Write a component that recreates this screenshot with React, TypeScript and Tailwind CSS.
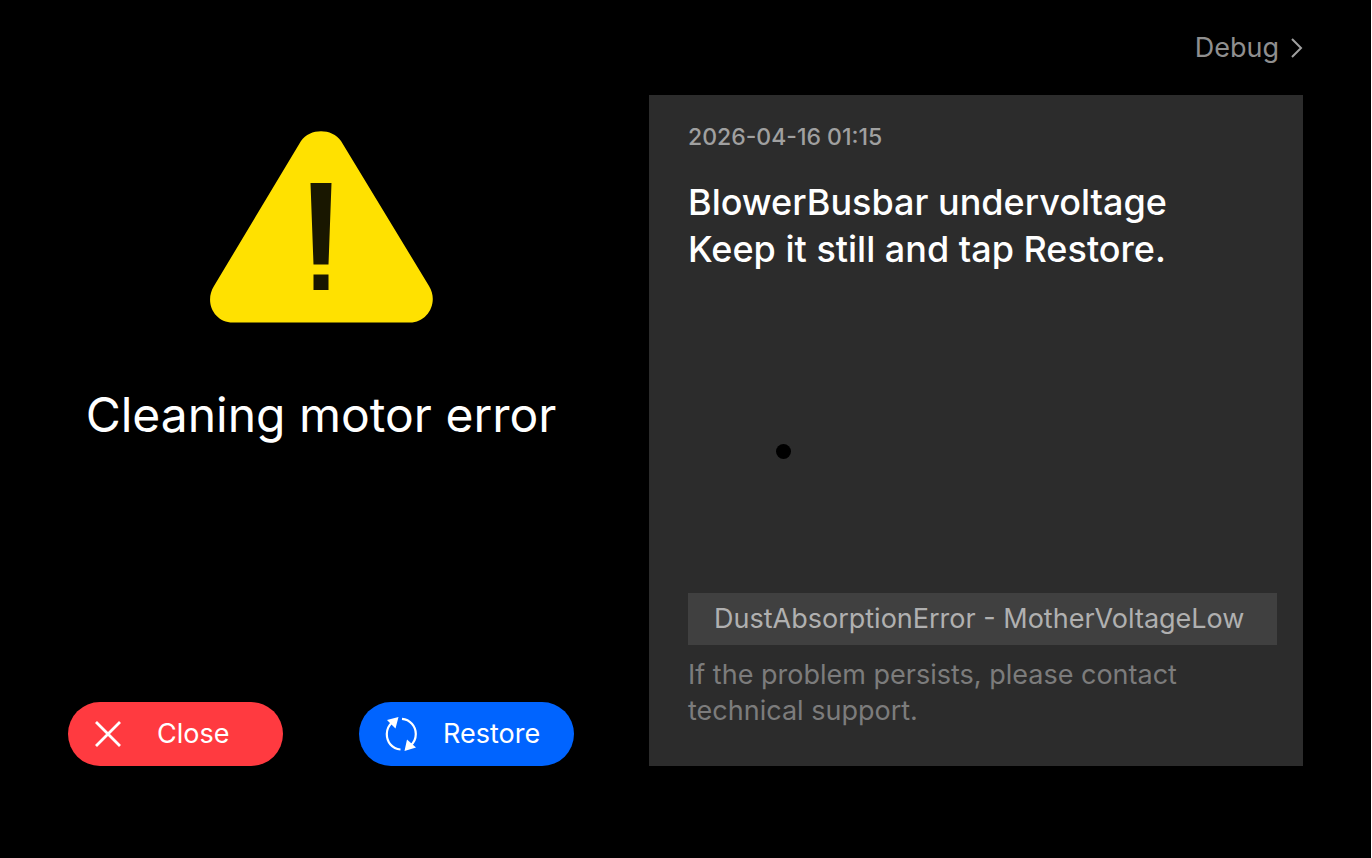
import { useState } from 'react';

const ERROR = {
  title: 'Cleaning motor error',
  time: '2026-04-16 01:15',
  messages: ['BlowerBusbar undervoltage', 'Keep it still and tap Restore.'],
  code: 'DustAbsorptionError - MotherVoltageLow',
};

function WarningIcon() {
  return (
    <svg width="224" height="192" viewBox="0 0 224 192" aria-hidden="true">
      <path
        d="M92 10C101 -3 123 -3 132 10L220 155C230 171 219 191.500 201 191.500H24C5 191.500 -5 171 5 155Z"
        fill="#ffe100"
      />
      <path d="M101.500 52H122.500L119.500 133.500H104.500ZM104.500 143.500H119.500V159H104.500Z" fill="#191700" />
    </svg>
  );
}

function CloseIcon() {
  return (
    <svg width="26" height="26" viewBox="0 0 26 26" aria-hidden="true">
      <path d="M1 1L25 25M25 1L1 25" stroke="#fff" strokeWidth="2.8" />
    </svg>
  );
}

function RestoreIcon() {
  return (
    <svg width="32" height="36" viewBox="0 0 32 36" aria-hidden="true">
      <g fill="none" stroke="#fff" strokeWidth="2.2">
        <path d="M15.500 33.5C7 33 1.8 26 1.8 18C1.8 13 4 9 8 5.5" />
        <path d="M17 2.8C25 3.5 30.8 10 30.8 18C30.8 23 29 27 25 30" />
      </g>
      <path d="M2 4L13.500 1L10.500 12.500ZM31 31.500L19.500 35L22 23.500Z" fill="#fff" />
    </svg>
  );
}

export default function App() {
  const [closed, setClosed] = useState(false);

  return (
    <div className="flex min-h-screen flex-col border-r border-white bg-black px-[68px] pb-[92px] font-['Inter',sans-serif] text-white">
      <header className="flex h-[95px] items-center justify-end">
        <a
          href="#debug"
          className="flex items-center gap-3 text-[27px] leading-8 text-[#8f8f8f]"
        >
          Debug
          <svg width="12" height="20" viewBox="0 0 12 20" aria-hidden="true">
            <path d="M1 1L10 10L1 19" fill="none" stroke="#a0a0a0" strokeWidth="2" />
          </svg>
        </a>
      </header>

      {!closed && (
        <main className="grid flex-1 grid-cols-[506fr_654fr] gap-[75px]">
          <section className="flex flex-col items-center pt-9">
            <WarningIcon />
            <h1 className="mt-[60px] text-[48px] leading-[64px] whitespace-nowrap">{ERROR.title}</h1>
            <div className="mt-auto flex w-full justify-between">
              <button
                onClick={() => setClosed(true)}
                className="flex h-16 w-[215px] items-center gap-9 rounded-full bg-[#ff3a40] pl-[27px] text-[27px]"
              >
                <CloseIcon />
                Close
              </button>
              <button className="flex h-16 w-[215px] items-center gap-[26px] rounded-full bg-[#0064ff] pl-[26px] text-[27px]">
                <RestoreIcon />
                Restore
              </button>
            </div>
          </section>

          <section className="relative flex flex-col bg-[#2c2c2c] pt-6 pr-[26px] pb-[37px] pl-[39px]">
            <time className="text-[23px] leading-9 font-medium text-[#a0a0a0]">{ERROR.time}</time>
            <div className="mt-6 text-[36px] leading-[47px] font-medium">
              {ERROR.messages.map((m) => (
                <p key={m}>{m}</p>
              ))}
            </div>
            <span className="absolute top-[52%] left-[19.4%] size-[15px] rounded-full bg-black" />
            <p className="mt-auto bg-[#404040] px-[26px] py-2 text-[27px] leading-9 whitespace-nowrap text-[#b0b0b0]">
              {ERROR.code}
            </p>
            <p className="mt-3 text-[27px] leading-9 text-[#7c7c7c]">
              If the problem persists, please contact technical support.
            </p>
          </section>
        </main>
      )}
    </div>
  );
}
